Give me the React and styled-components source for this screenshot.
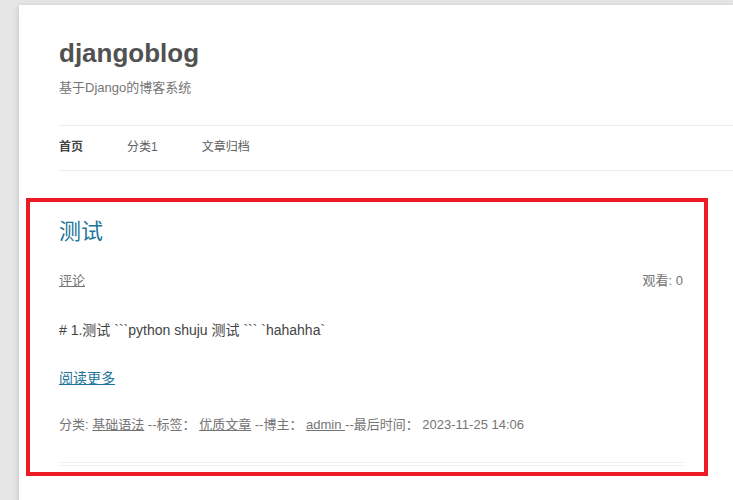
import React from "react";
import styled, { createGlobalStyle } from "styled-components";

const GlobalStyle = createGlobalStyle`
  html, body {
    margin: 0;
    padding: 0;
    background: #e6e6e6;
    overflow: hidden;
  }
  body {
    font-family: "Liberation Sans", Arial, "Noto Sans CJK SC", sans-serif;
    color: #444;
  }
`;

const navItems = [
  { label: "首页", current: true },
  { label: "分类1" },
  { label: "文章归档" },
];

function App() {
  return (
    <>
      <GlobalStyle />
      <Page>
        <Header>
          <SiteTitle>djangoblog</SiteTitle>
          <SiteDescription>基于Django的博客系统</SiteDescription>
        </Header>
        <Nav>
          {navItems.map((item) => (
            <NavItem key={item.label} current={item.current}>
              {item.label}
            </NavItem>
          ))}
        </Nav>
        <Article>
          <Highlight />
          <EntryTitle>测试</EntryTitle>
          <EntryInfo>
            <MetaLink>评论</MetaLink>
            <span>观看: 0</span>
          </EntryInfo>
          <EntryContent># 1.测试 ```python shuju 测试 ``` `hahahha`</EntryContent>
          <ReadMore>阅读更多</ReadMore>
          <EntryMeta>
            分类: <MetaLink>基础语法</MetaLink> --标签：&nbsp;
            <MetaLink>优质文章</MetaLink> --博主：&nbsp;
            <MetaLink>admin </MetaLink>--最后时间：&nbsp;2023-11-25 14:06
          </EntryMeta>
          <DoubleRule />
        </Article>
      </Page>
    </>
  );
}

export default App;

const Page = styled.div`
  margin: 5px 0 0 19px;
  min-height: 520px;
  padding: 30px 0 0 40px;
  box-sizing: border-box;
  background: #fff;
  box-shadow: 0 2px 6px rgba(100, 100, 100, 0.3);
`;

const Header = styled.header`
  padding-bottom: 25px;
`;

const SiteTitle = styled.h1`
  margin: 0;
  font-size: 26px;
  line-height: 36px;
  font-weight: bold;
  color: #515151;
`;

const SiteDescription = styled.h2`
  margin: 5px 0 0;
  font-size: 13px;
  line-height: 24px;
  font-weight: normal;
  color: #757575;
`;

const Nav = styled.nav`
  display: flex;
  gap: 44px;
  height: 42px;
  padding-bottom: 2px;
  align-items: center;
  border-top: 1px solid #ededed;
  border-bottom: 1px solid #ededed;
`;

const NavItem = styled.a`
  font-size: 12px;
  line-height: 16px;
  color: ${(props) => (props.current ? "#444" : "#5e5e5e")};
  font-weight: ${(props) => (props.current ? "bold" : "normal")};
  text-decoration: none;
`;

const Article = styled.article`
  position: relative;
  width: 624px;
  margin-top: 24px;
`;

const Highlight = styled.div`
  position: absolute;
  top: 3px;
  left: -33px;
  width: 682px;
  height: 278px;
  box-sizing: border-box;
  border: 4px solid #ed1c24;
  pointer-events: none;
`;

const EntryTitle = styled.h1`
  margin: 0;
  padding-top: 23px;
  font-size: 22px;
  line-height: 28px;
  font-weight: normal;
  color: #21759b;
`;

const EntryInfo = styled.div`
  display: flex;
  justify-content: space-between;
  margin-top: 25px;
  font-size: 13px;
  line-height: 20px;
  color: #757575;
`;

const MetaLink = styled.a`
  color: #757575;
  text-decoration: underline;
`;

const EntryContent = styled.p`
  margin: 28px 0 0;
  font-size: 14px;
  line-height: 22px;
  color: #444;
`;

const ReadMore = styled.a`
  display: inline-block;
  margin-top: 26px;
  font-size: 14px;
  line-height: 22px;
  color: #21759b;
  text-decoration: underline;
`;

const EntryMeta = styled.div`
  margin-top: 26px;
  font-size: 13px;
  line-height: 20px;
  color: #757575;
`;

const DoubleRule = styled.div`
  margin-top: 27px;
  height: 2px;
  border-top: 1px solid #ededed;
  border-bottom: 1px solid #ededed;
`;
